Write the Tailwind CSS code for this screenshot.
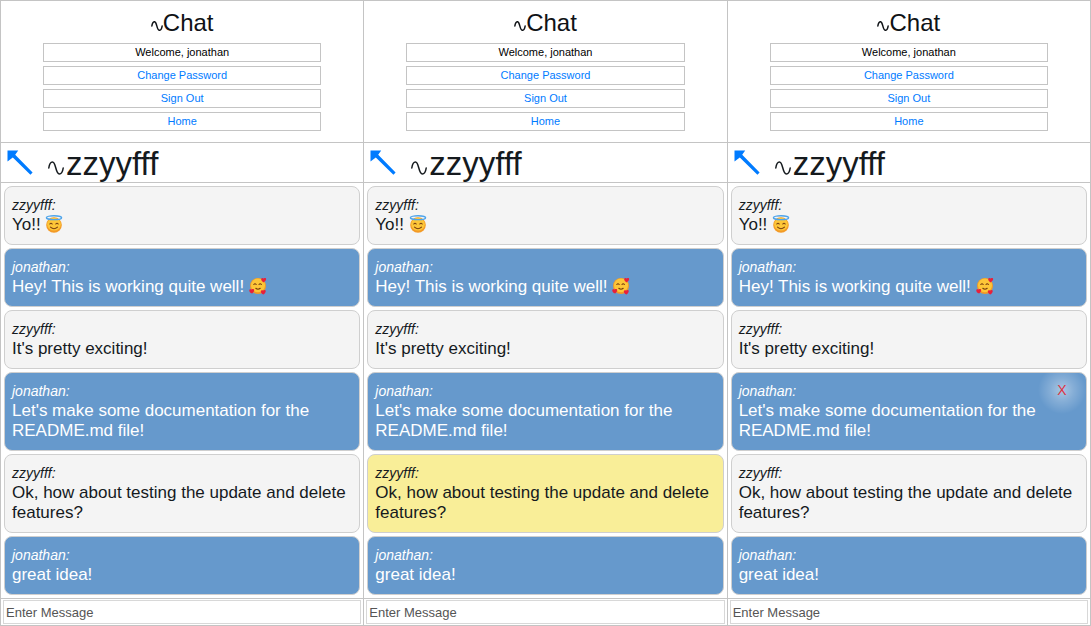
<!DOCTYPE html>
<html lang="en">
<head>
<meta charset="utf-8">
<meta name="viewport" content="width=device-width, initial-scale=1">
<title>Chat</title>
<script src="https://cdn.jsdelivr.net/npm/@tailwindcss/browser@4"></script>
</head>
<body class="min-h-screen bg-white font-['Liberation_Sans',Arial,sans-serif] text-[#151a1e]">
<svg class="hidden" aria-hidden="true">
  <symbol id="sine" viewBox="0 0 16 14"><path d="M.8 7C1.300 3.500 2.600 1 4.500 1C8 1 7.500 13 11.300 13C13.400 13 14.700 10.500 15.200 7" fill="none" stroke="currentColor" stroke-width="1.500" vector-effect="non-scaling-stroke" stroke-linecap="round"/></symbol>
  <symbol id="arrow" viewBox="0 0 26 26"><path d="M.5 .5H11.200L8.200 4.800L25.600 22.400L23.400 24.800L5.800 7.400L.5 11.500Z" fill="currentColor"/></symbol>
  <symbol id="halo" viewBox="0 0 18 18">
    <circle cx="9" cy="10" r="7.800" fill="#f39a26"/><ellipse cx="9" cy="9.200" rx="6.800" ry="6.400" fill="#fdc638"/>
    <ellipse cx="9" cy="2.700" rx="7.600" ry="1.900" fill="none" stroke="#4ea4ea" stroke-width="1.400"/>
    <path d="M4.800 9q1.200-1.600 2.400 0M10.800 9q1.200-1.600 2.400 0M5.500 12.200q3.500 3 7 0" fill="none" stroke="#7a3f10" stroke-width="1.100" stroke-linecap="round"/>
  </symbol>
  <symbol id="hearts" viewBox="0 0 18 18">
    <circle cx="9" cy="9" r="8" fill="#f39a26"/><ellipse cx="9" cy="8.400" rx="7" ry="6.800" fill="#fdc638"/>
    <path d="M4.800 7.500q1.200-1.600 2.400 0M10 7.500q1.200-1.600 2.400 0M6.800 11.300q2.200 1.800 4.400 0" fill="none" stroke="#7a3f10" stroke-width="1.100" stroke-linecap="round"/>
    <path d="M14.500 5.500C10.500 3 12.500-.5 14.700 1.500C17.500-.3 18.500 3 14.500 5.500ZM3.200 16.500C-1 15-.3 11 2.700 12.500C5.200 10.800 6.500 14 3.200 16.500ZM14.500 17.500C10.500 16 11.500 12 14 13.500C17 11.500 18 15 14.500 17.500Z" fill="#e8203a"/>
  </symbol>
</svg>
<main id="app" class="grid min-h-screen grid-cols-3 border-l border-t border-[#c4c4c4]"></main>

<template id="panel">
  <section class="flex min-w-0 flex-col border-b border-r border-[#c4c4c4]">
    <header class="border-b border-[#c4c4c4] px-[42px] pb-[11px] pt-1.5">
      <h1 class="flex h-8 items-center justify-center text-2xl text-[#0f1216]"><svg class="mt-1.5 h-2.5 w-3" aria-hidden="true"><use href="#sine"/></svg>Chat</h1>
      <nav class="mt-1 flex flex-col gap-1 text-center text-[11px] leading-[17px]">
        <p class="border border-[#c4c4c4] text-black">Welcome, jonathan</p>
        <a href="#" class="border border-[#c4c4c4] text-[#007bff]">Change Password</a>
        <a href="#" class="border border-[#c4c4c4] text-[#007bff]">Sign Out</a>
        <a href="#" class="border border-[#c4c4c4] text-[#007bff]">Home</a>
      </nav>
    </header>
    <div class="flex h-10 items-center border-b border-[#c4c4c4] pl-1.5">
      <a href="#" aria-label="Back" class="text-[#007bff]"><svg class="size-[26px]" aria-hidden="true"><use href="#arrow"/></svg></a>
      <h2 class="ml-[15px] flex items-center gap-0.5 pt-0.5 text-[33px] leading-9"><svg class="mt-2 h-3.5 w-4" aria-hidden="true"><use href="#sine"/></svg>zzyyfff</h2>
    </div>
    <ul class="flex grow flex-col gap-[3px] p-[3px]"></ul>
    <form class="border-t border-[#c4c4c4] px-0.5 py-px">
      <input type="text" aria-label="Enter Message" placeholder="Enter Message" class="block h-6 w-full border border-[#d8d8d8] px-0.5 text-[13px] placeholder:text-[#555]">
    </form>
  </section>
</template>
<template id="message">
  <li class="relative rounded-lg border border-[#cfcfcf] pb-[9px] pl-[7px] pr-2 pt-2">
    <p data-name class="text-sm leading-5 italic"></p>
    <p data-text class="text-[17px] leading-5"></p>
  </li>
</template>
<script>
const messages = [
  ['zzyyfff', 'Yo!! ', 'halo'],
  ['jonathan', 'Hey! This is working quite well! ', 'hearts'],
  ['zzyyfff', "It's pretty exciting!"],
  ['jonathan', "Let's make some documentation for the README.md file!"],
  ['zzyyfff', 'Ok, how about testing the update and delete features?'],
  ['jonathan', 'great idea!']
];
const app = document.getElementById('app');
for (let p = 0; p < 3; p++) {
  const panel = document.getElementById('panel').content.cloneNode(true);
  const list = panel.querySelector('ul');
  messages.forEach(([name, text, emoji], i) => {
    const item = document.getElementById('message').content.cloneNode(true);
    const li = item.querySelector('li');
    const mine = name === 'jonathan';
    li.className += mine ? ' bg-[#6699cc] text-white' : (p === 1 && i === 4 ? ' bg-[#f9ee98]' : ' bg-[#f4f4f4]');
    item.querySelector('[data-name]').textContent = name + ':';
    const body = item.querySelector('[data-text]');
    body.textContent = text;
    if (emoji) body.insertAdjacentHTML('beforeend', `<svg class="inline-block size-[18px] align-[-3px]" role="img" aria-label="${emoji}"><use href="#${emoji}"/></svg>`);
    if (p === 2 && i === 3) {
      li.classList.add('overflow-hidden');
      li.insertAdjacentHTML('beforeend', '<button type="button" aria-label="Delete message" class="absolute right-0 -top-[7px] size-12 bg-radial-[closest-side] from-white/45 via-white/20 to-transparent text-sm leading-none text-[#dc3545]">X</button>');
    }
    list.append(item);
  });
  app.append(panel);
}
</script>
</body>
</html>
